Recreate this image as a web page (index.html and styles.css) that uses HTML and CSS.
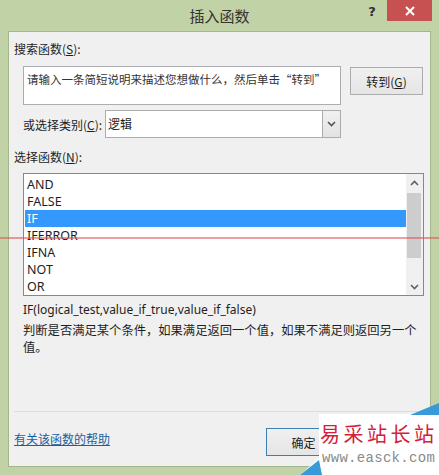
FILE: index.html
```html
<!DOCTYPE html>
<html lang="zh-CN">
<head>
<meta charset="utf-8">
<title>插入函数</title>
<link rel="stylesheet" href="styles.css">
</head>
<body>
<div class="window">
  <div class="titlebar">
    <div></div>
    <div class="title">插入函数</div>
    <div class="controls">
      <span class="help">?</span>
      <span class="close"><svg width="10" height="10" viewBox="0 0 10 10"><path d="M1 1 L9 9 M9 1 L1 9" stroke="#fff" stroke-width="2"/></svg></span>
    </div>
  </div>
  <div class="panel">
    <div class="label">搜索函数(<u>S</u>):</div>
    <div class="search-row">
      <div class="search-box">请输入一条简短说明来描述您想做什么，然后单击“转到”</div>
      <button class="btn go">转到(<u>G</u>)</button>
    </div>
    <div class="cat-row">
      <span class="cat-label">或选择类别(<u>C</u>):</span>
      <div class="select">
        <span class="select-text">逻辑</span>
        <span class="drop"><svg width="9" height="6" viewBox="0 0 9 6"><path d="M1 1 L4.5 4.5 L8 1" fill="none" stroke="#555" stroke-width="1.6"/></svg></span>
      </div>
    </div>
    <div class="label fn-label">选择函数(<u>N</u>):</div>
    <div class="listbox">
      <ul class="items">
        <li>AND</li>
        <li>FALSE</li>
        <li class="selected">IF</li>
        <li>IFERROR</li>
        <li>IFNA</li>
        <li>NOT</li>
        <li>OR</li>
      </ul>
      <div class="scrollbar">
        <span class="arrow"><svg width="9" height="6" viewBox="0 0 9 6"><path d="M1 5 L4.5 1.5 L8 5" fill="none" stroke="#606060" stroke-width="1.6"/></svg></span>
        <span class="thumb"></span>
        <span class="track"></span>
        <span class="arrow"><svg width="9" height="6" viewBox="0 0 9 6"><path d="M1 1 L4.5 4.5 L8 1" fill="none" stroke="#606060" stroke-width="1.6"/></svg></span>
      </div>
    </div>
    <div class="syntax">IF(logical_test,value_if_true,value_if_false)</div>
    <div class="desc">判断是否满足某个条件，如果满足返回一个值，如果不满足则返回另一个值。</div>
    <div class="sep"></div>
    <div class="footer">
      <a class="help-link" href="#">有关该函数的帮助</a>
      <div class="buttons">
        <button class="btn default">确定</button>
        <button class="btn" aria-label="取消"></button>
      </div>
    </div>
  </div>
  <div class="redline"></div>
  <div class="watermark">
    <svg class="wm-shape" width="141" height="75" viewBox="0 0 141 75">
      <polygon points="21,14 141,14 141,75 2,75 21,58" fill="#ffffff"/>
      <polygon points="112,15 141,3 141,15" fill="#3a9ad9"/>
      <polygon points="2,75 21,60 24,75" fill="#3a9ad9"/>
    </svg>
    <div class="wm-cn">易采站长站</div>
    <div class="wm-url">www.easck.com</div>
  </div>
</div>
</body>
</html>
```

FILE: styles.css
```css
* { box-sizing: border-box; }
html, body { margin: 0; padding: 0; }
body {
  width: 439px;
  height: 475px;
  overflow: hidden;
  font-family: "Noto Sans", "Noto Sans CJK SC", sans-serif;
  font-size: 12px;
  color: #1e1e1e;
}
u { text-decoration: underline; text-underline-offset: 1px; }

.window {
  position: relative;
  width: 439px;
  height: 475px;
  background: #c1d2a6;
}

.titlebar {
  height: 31px;
  display: grid;
  grid-template-columns: 1fr auto 1fr;
}
.title {
  font-family: "Noto Sans CJK SC", sans-serif;
  font-size: 15px;
  line-height: 31px;
  color: #333;
}
.controls {
  display: flex;
  justify-content: flex-end;
  align-items: flex-start;
  padding-right: 7px;
}
.help {
  width: 20px;
  margin-right: 5px;
  font-family: "DejaVu Sans", sans-serif;
  font-weight: bold;
  font-size: 13px;
  line-height: 24px;
  text-align: center;
  color: #2f2f2f;
}
.close {
  width: 45px;
  height: 21px;
  background: #c75050;
  display: flex;
  align-items: center;
  justify-content: center;
}

.panel {
  margin: 0 8px;
  height: 436px;
  background: #f0f0f0;
  border: 1px solid #a4b68c;
  padding: 0 6px 10px 5px;
  display: flex;
  flex-direction: column;
}
.label {
  margin-top: 8px;
  line-height: 17px;
  font-family: "Noto Sans CJK SC", sans-serif;
}

.search-row {
  margin-top: 9px;
  display: flex;
  align-items: flex-start;
}
.search-box {
  margin-left: 9px;
  width: 318px;
  height: 39px;
  background: #fff;
  border: 1px solid #abadb3;
  padding: 4px 3px;
  line-height: 17px;
  font-family: "Noto Sans CJK SC", sans-serif;
  font-size: 11.5px;
  color: #333;
  white-space: nowrap;
  overflow: hidden;
}
.btn {
  height: 28px;
  width: 75px;
  border: 1px solid #acacac;
  background: linear-gradient(#f0f0f0, #e5e5e5);
  font-family: "Noto Sans CJK SC", sans-serif;
  font-size: 12px;
  color: #1e1e1e;
  padding: 0;
}
.go {
  width: 73px;
  margin-left: 9px;
  margin-top: 1px;
}

.cat-row {
  margin-top: 5px;
  display: flex;
  align-items: center;
}
.cat-label {
  margin-left: 9px;
  width: 82px;
  font-family: "Noto Sans CJK SC", sans-serif;
}
.select {
  width: 236px;
  height: 28px;
  border: 1px solid #acacac;
  background: #fff;
  display: flex;
}
.select-text {
  flex: 1;
  padding-left: 2px;
  line-height: 26px;
  font-family: "Noto Sans CJK SC", sans-serif;
}
.drop {
  width: 18px;
  border-left: 1px solid #acacac;
  background: linear-gradient(#f0f0f0, #e3e3e3);
  display: flex;
  align-items: center;
  justify-content: center;
}

.fn-label { margin-top: 10px; }

.listbox {
  margin-top: 8px;
  margin-left: 9px;
  width: 401px;
  height: 123px;
  border: 1px solid #828790;
  background: #fff;
  display: flex;
}
.items {
  flex: 1;
  list-style: none;
  margin: 0;
  padding: 2px 0 0 1px;
}
.items li {
  height: 17px;
  line-height: 17px;
  padding-left: 2px;
  font-size: 12.5px;
  color: #1e1e1e;
}
.items li.selected {
  background: #3399ff;
  color: #fff;
}
.scrollbar {
  width: 17px;
  background: #f0f0f0;
  display: flex;
  flex-direction: column;
}
.arrow {
  height: 17px;
  display: flex;
  align-items: center;
  justify-content: center;
}
.thumb {
  height: 65px;
  margin: 2px 2px 0 1px;
  background: #cdcdcd;
}
.track { flex: 1; }

.syntax {
  margin-top: 5px;
  margin-left: 9px;
  line-height: 17px;
}
.desc {
  margin-top: 4px;
  margin-left: 9px;
  width: 398px;
  line-height: 17px;
  font-family: "Noto Sans CJK SC", sans-serif;
  font-size: 12.3px;
}
.sep {
  margin-top: auto;
  height: 1px;
  background: #dcdcdc;
}
.footer {
  margin-top: 16px;
  display: flex;
  justify-content: space-between;
  align-items: flex-start;
}
.help-link {
  margin-top: 2px;
  line-height: 17px;
  font-family: "Noto Sans CJK SC", sans-serif;
  color: #1f5e9c;
  text-decoration: underline;
}
.buttons {
  display: flex;
  gap: 8px;
}
.btn.default { border-color: #3c7fb1; }

.redline {
  position: absolute;
  left: 0;
  top: 237px;
  width: 439px;
  height: 2px;
  background: rgba(222, 80, 80, 0.55);
}

.watermark {
  position: absolute;
  left: 298px;
  top: 400px;
  width: 141px;
  height: 75px;
}
.wm-shape { position: absolute; left: 0; top: 0; }
.wm-cn {
  position: relative;
  margin: 21px 0 0 22px;
  font-family: "Noto Sans CJK SC", sans-serif;
  font-size: 20px;
  line-height: 26px;
  letter-spacing: 3.5px;
  color: #d4203a;
}
.wm-url {
  position: relative;
  margin: 3px 0 0 24px;
  font-family: "Liberation Mono", monospace;
  font-size: 14px;
  line-height: 16px;
  letter-spacing: 0.3px;
  color: #8a8a8a;
}
```
